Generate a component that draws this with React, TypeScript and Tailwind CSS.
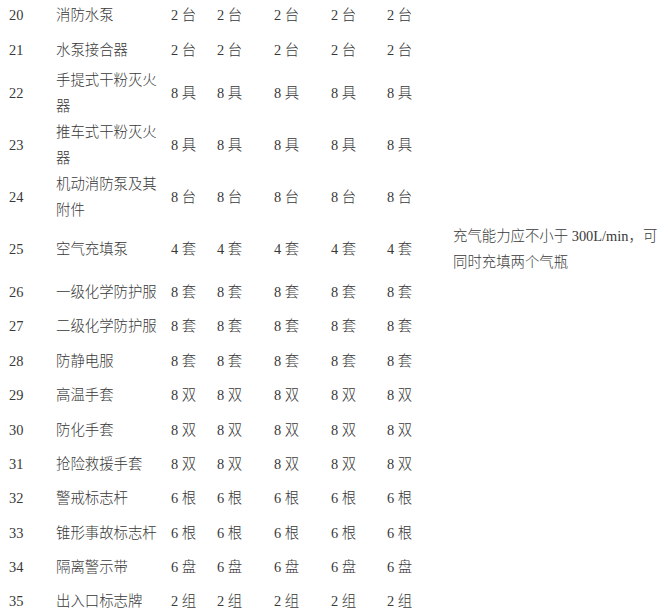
import React from "react";

type Row = { n: number; name: string; q: string; note?: string[] };

const rows: Row[] = [
  { n: 20, name: "消防水泵", q: "2 台" },
  { n: 21, name: "水泵接合器", q: "2 台" },
  { n: 22, name: "手提式干粉灭火器", q: "8 具" },
  { n: 23, name: "推车式干粉灭火器", q: "8 具" },
  { n: 24, name: "机动消防泵及其附件", q: "8 台" },
  { n: 25, name: "空气充填泵", q: "4 套", note: ["充气能力应不小于 300L/min，可", "同时充填两个气瓶"] },
  { n: 26, name: "一级化学防护服", q: "8 套" },
  { n: 27, name: "二级化学防护服", q: "8 套" },
  { n: 28, name: "防静电服", q: "8 套" },
  { n: 29, name: "高温手套", q: "8 双" },
  { n: 30, name: "防化手套", q: "8 双" },
  { n: 31, name: "抢险救援手套", q: "8 双" },
  { n: 32, name: "警戒标志杆", q: "6 根" },
  { n: 33, name: "锥形事故标志杆", q: "6 根" },
  { n: 34, name: "隔离警示带", q: "6 盘" },
  { n: 35, name: "出入口标志牌", q: "2 组" },
];

export default function App() {
  return (
    <div
      className="w-[668px] h-[612px] overflow-hidden bg-white text-[#383838] text-[14.4px] leading-[26px]"
      style={{ fontFamily: '"Liberation Serif", "Noto Sans CJK SC", serif' }}
    >
      <div className="-mt-[2px] pl-[9px]">
        {rows.map((r) => (
          <div
            key={r.n}
            className="grid grid-cols-[47px_115px_46px_57px_57px_56px_66px_1fr] items-center min-h-[34.4px]"
          >
            <div>{r.n}</div>
            <div className="w-[104px] font-light">{r.name}</div>
            <div className="font-light">{r.q}</div>
            <div className="font-light">{r.q}</div>
            <div className="font-light">{r.q}</div>
            <div className="font-light">{r.q}</div>
            <div className="font-light">{r.q}</div>
            <div className="font-light whitespace-nowrap">
              {r.note ? r.note.map((l) => <div key={l}>{l}</div>) : null}
            </div>
          </div>
        ))}
      </div>
    </div>
  );
}
